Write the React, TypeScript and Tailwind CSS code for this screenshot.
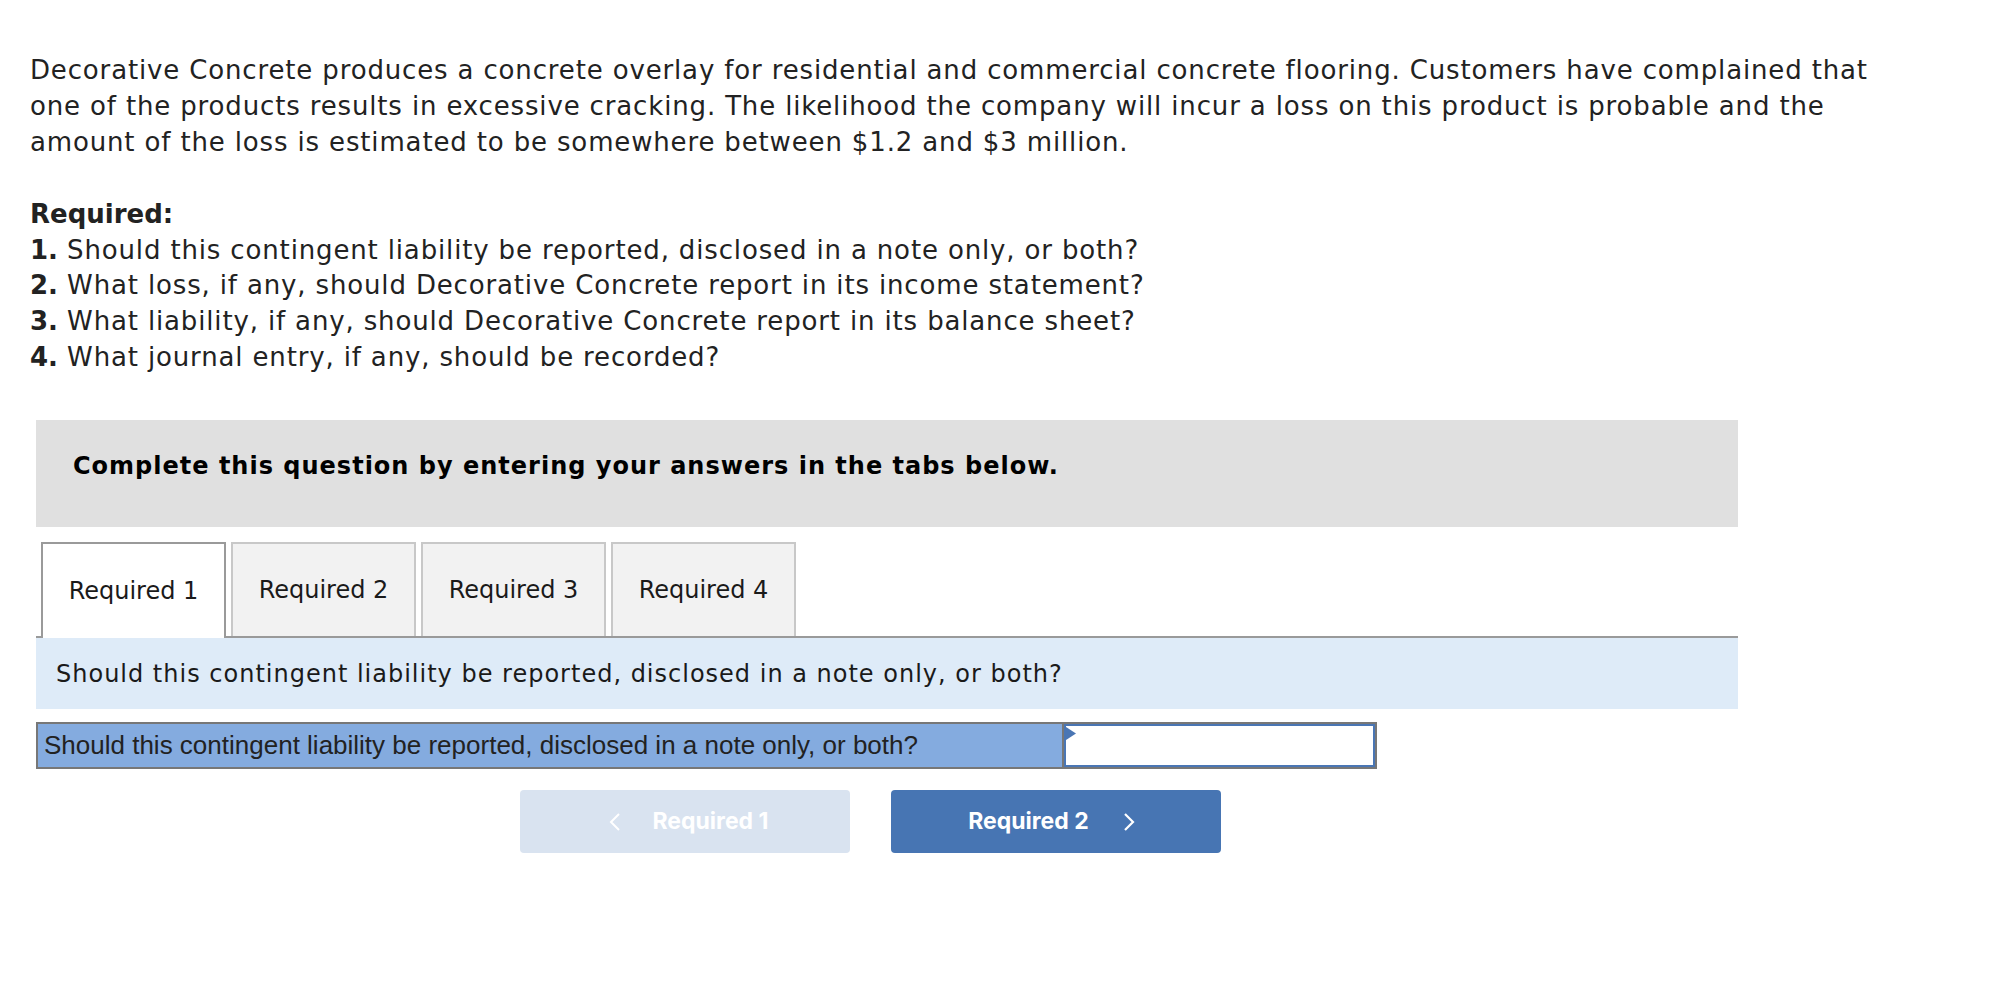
import React from "react";

const PARA = "font-['DejaVu_Sans',sans-serif]";
const VERD = "font-['DejaVu_Sans','Verdana',sans-serif]";

function Tab({ label, active }: { label: string; active?: boolean }) {
  if (active) {
    return (
      <div className="w-[185px] h-[96px] -mb-[2px] bg-white border-[2px] border-b-0 border-[#9a9a9a] flex items-center justify-center text-[24px] text-[#1a1a1a]">
        {label}
      </div>
    );
  }
  return (
    <div className="w-[185px] h-[94px] bg-[#f2f2f2] border-[2px] border-b-0 border-[#c8c8c8] flex items-center justify-center text-[24px] text-[#1a1a1a]">
      {label}
    </div>
  );
}

export default function App() {
  return (
    <div className="w-[1994px] min-h-[1000px] bg-white">
      <div className={`${PARA} pl-[30px] pt-[53px] text-[26px] leading-[35.9px] tracking-[0.85px] text-[#222]`}>
        <p>
          Decorative Concrete produces a concrete overlay for residential and commercial concrete flooring. Customers have complained that
          <br />
          one of the products results in excessive cracking. The likelihood the company will incur a loss on this product is probable and the
          <br />
          amount of the loss is estimated to be somewhere between $1.2 and $3 million.
        </p>
        <p className="mt-[35.9px] font-bold tracking-[0px]">Required:</p>
        <p><span className="font-bold tracking-[0px]">1.</span> Should this contingent liability be reported, disclosed in a note only, or both?</p>
        <p><span className="font-bold tracking-[0px]">2.</span> What loss, if any, should Decorative Concrete report in its income statement?</p>
        <p><span className="font-bold tracking-[0px]">3.</span> What liability, if any, should Decorative Concrete report in its balance sheet?</p>
        <p><span className="font-bold tracking-[0px]">4.</span> What journal entry, if any, should be recorded?</p>
      </div>

      <div className={`${VERD} ml-[36px] w-[1702px] mt-[44px]`}>
        <div className="h-[107px] bg-[#e0e0e0] pl-[37px] pt-[31px]">
          <div className="text-[24px] font-bold tracking-[1px] text-black leading-[30px]">
            Complete this question by entering your answers in the tabs below.
          </div>
        </div>

        <div className="mt-[15px] flex items-end gap-[5px] pl-[5px] border-b-[2px] border-[#9a9a9a]">
          <Tab label="Required 1" active />
          <Tab label="Required 2" />
          <Tab label="Required 3" />
          <Tab label="Required 4" />
        </div>

        <div className="h-[71px] bg-[#deebf8] pl-[20px] flex items-center text-[24px] tracking-[1px] text-[#1a1a1a]">
          Should this contingent liability be reported, disclosed in a note only, or both?
        </div>
      </div>

      <div className="ml-[36px] mt-[13px] w-[1341px] h-[47px] border-[2px] border-[#777] flex">
        <div className="flex-1 bg-[#84abdf] flex items-center pl-[6px] font-['Liberation_Sans',Arial,sans-serif] text-[26px] text-[#222]">
          Should this contingent liability be reported, disclosed in a note only, or both?
        </div>
        <div className="w-[313px] border-l-[2px] border-[#777]">
          <div className="relative w-full h-full border-[2px] border-[#4a76b4] bg-white">
            <svg className="absolute left-0 top-[1px]" width="11" height="13" viewBox="0 0 11 13">
              <polygon points="0,0 10,6.5 0,13" fill="#4a76b4" />
            </svg>
          </div>
        </div>
      </div>

      <div className="font-['Inter',sans-serif] ml-[520px] mt-[21px] flex gap-[41px]">
        <div className="w-[330px] h-[63px] rounded-[4px] bg-[#d9e3f0] flex items-center justify-center gap-[31px] pl-[6px] text-white font-bold text-[23px]">
          <svg width="14" height="20" viewBox="0 0 14 20">
            <polyline points="11,2 3,10 11,18" fill="none" stroke="white" strokeWidth="2" />
          </svg>
          <span>Required 1</span>
        </div>
        <div className="w-[330px] h-[63px] rounded-[4px] bg-[#4775b3] flex items-center justify-center gap-[33px] pr-[8px] text-white font-bold text-[23px]">
          <span>Required 2</span>
          <svg width="14" height="20" viewBox="0 0 14 20">
            <polyline points="3,2 11,10 3,18" fill="none" stroke="white" strokeWidth="2.2" />
          </svg>
        </div>
      </div>
    </div>
  );
}
